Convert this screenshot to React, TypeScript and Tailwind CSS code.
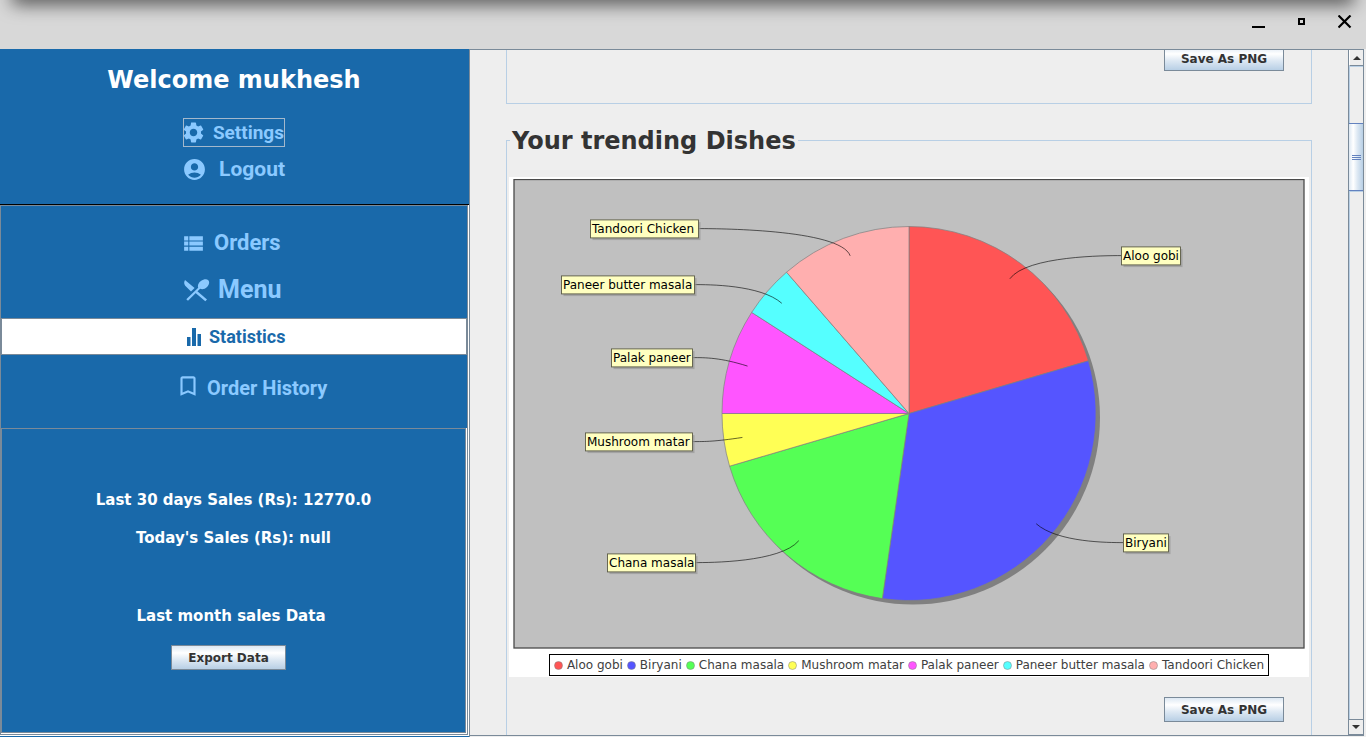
import type { ReactNode } from "react";
import {
  MdSettings,
  MdAccountCircle,
  MdViewList,
  MdBookmarkBorder,
} from "react-icons/md";

type Slice = {
  name: string;
  count: number;
  color: string;
  label: { x: number; y: number; width: number };
};

const SLICES: Slice[] = [
  { name: "Aloo gobi", count: 9, color: "#ff5555", label: { x: 1121, y: 256, width: 59 } },
  { name: "Biryani", count: 14, color: "#5555ff", label: { x: 1123, y: 543, width: 45 } },
  { name: "Chana masala", count: 8, color: "#55ff55", label: { x: 607, y: 563, width: 88 } },
  { name: "Mushroom matar", count: 2, color: "#ffff55", label: { x: 585, y: 442, width: 107 } },
  { name: "Palak paneer", count: 4, color: "#ff55ff", label: { x: 611, y: 358, width: 81 } },
  { name: "Paneer butter masala", count: 2, color: "#55ffff", label: { x: 561, y: 285, width: 133 } },
  { name: "Tandoori Chicken", count: 5, color: "#ffafaf", label: { x: 590, y: 229, width: 108 } },
];

const TOTAL = SLICES.reduce((sum, s) => sum + s.count, 0);
const CX = 909;
const CY = 413.5;
const R = 187;

function polar(fraction: number, radius: number): [number, number] {
  const a = fraction * Math.PI * 2;
  return [CX + Math.sin(a) * radius, CY - Math.cos(a) * radius];
}

function PieChart() {
  let start = 0;
  const wedges = SLICES.map((s) => {
    const from = start / TOTAL;
    start += s.count;
    const to = start / TOTAL;
    return { ...s, from, to, mid: (from + to) / 2 };
  });
  return (
    <svg viewBox="513 179 792 470" className="block w-full" role="img" aria-label="Trending dishes">
      <rect x="514" y="179.5" width="790" height="468.5" fill="#c0c0c0" stroke="#4a4a4a" strokeWidth="1.3" />
      <circle cx={CX + 4} cy={CY + 4} r={R} fill="#808080" />
      {wedges.map((w) => {
        const [x1, y1] = polar(w.from, R);
        const [x2, y2] = polar(w.to, R);
        const large = w.to - w.from > 0.5 ? 1 : 0;
        return (
          <path
            key={w.name}
            d={`M${CX} ${CY}L${x1} ${y1}A${R} ${R} 0 ${large} 1 ${x2} ${y2}Z`}
            fill={w.color}
            stroke="#808080"
            strokeWidth="0.7"
          />
        );
      })}
      {wedges.map((w) => {
        const right = w.mid < 0.5;
        const edge = right ? w.label.x : w.label.x + w.label.width;
        const near = right ? edge - 14 : edge + 14;
        const [lx, ly] = polar(w.mid, R * 0.9);
        const [ex] = polar(w.mid, R * 1.05);
        const y = w.label.y - 0.4;
        return (
          <g key={w.name}>
            <path
              d={`M${edge} ${y}C${near} ${y} ${ex} ${y} ${lx} ${ly}`}
              fill="none"
              stroke="#000"
              strokeOpacity="0.75"
              strokeWidth="0.8"
            />
            <rect x={w.label.x + 2.5} y={y - 6.5} width={w.label.width} height="18" fill="#979797" fillOpacity="0.7" />
            <rect
              x={w.label.x + 0.5}
              y={y - 8.7}
              width={w.label.width}
              height="18"
              fill="#ffffc0"
              stroke="#5b5b46"
              strokeWidth="0.9"
            />
            <text x={w.label.x + 2} y={w.label.y + 4} className="font-['DejaVu_Sans'] text-[12px]" fill="#000">
              {w.name}
            </text>
          </g>
        );
      })}
    </svg>
  );
}

function SteelButton({ children, className = "" }: { children: ReactNode; className?: string }) {
  return (
    <button
      type="button"
      className={`h-[25px] shrink-0 border border-[#7a8a99] bg-[linear-gradient(#dde8f3_0%,#ffffff_30%,#dde8f3_60%,#b8cfe5_100%)] text-[12px] font-bold text-[#333333] ${className}`}
    >
      {children}
    </button>
  );
}

function CutleryIcon() {
  return (
    <svg viewBox="0 0 26 23" className="h-[23px] w-[26px]" fill="currentColor" aria-hidden="true">
      <path d="M1 1c-1.500 2.500-.8 4.800 1 6.600l5 5 3.600-3.600z" />
      <path d="M14.200 8.800c-.9-2.300.2-5 2.700-6.800 2.700-2 5.900-2.300 7.400-.8s1 4.500-1.300 6.700c-2.100 2.100-4.800 2.800-6.900 1.800L4 21.800l-1.700-1.600z" />
      <path d="m12.500 11.500 10.500 9-1.700 1.700L10.600 13.200z" />
    </svg>
  );
}

function BarsIcon() {
  return (
    <svg viewBox="0 0 14 18" className="h-[18px] w-[14px]" fill="currentColor" aria-hidden="true">
      <path d="M0 9h3.500v9H0zM5 0h4v18H5zM10.500 6H14v12h-3.500z" />
    </svg>
  );
}

const NAV_LINK = "flex items-center font-['Roboto'] leading-[28px] text-[#8bc9ff]";

function Sidebar() {
  return (
    <aside className="flex w-[470px] shrink-0 flex-col border-r border-[#7a8a99] bg-[#1969aa]">
      <div className="flex h-[156px] flex-col items-center border-b border-black pr-px pt-[16px]">
        <h1 className="text-[24px] font-bold leading-[30px] text-white">Welcome mukhesh</h1>
        <nav className="mt-[23px] flex w-[102px] flex-col gap-[8px]" aria-label="Account">
          <a href="#settings" className={`${NAV_LINK} h-[29px] justify-between border border-[#a3b8cc] text-[19px] font-bold`}>
            <MdSettings className="-ml-[3px] size-[25px]" />
            Settings
          </a>
          <a href="#logout" className={`${NAV_LINK} justify-between text-[21px] font-bold`}>
            <MdAccountCircle className="-ml-[1px] size-[25px]" />
            Logout
          </a>
        </nav>
      </div>
      <div className="mb-px flex flex-1 flex-col border-b border-r border-white">
        <div className="flex flex-1 flex-col border border-[#7a8a99]">
          <nav className="flex flex-col" aria-label="Main">
            <a href="#orders" className={`${NAV_LINK} mt-[23px] pl-[180px] text-[22px] font-bold`}>
              <MdViewList className="size-[25px]" />
              <span className="ml-[8px]">Orders</span>
            </a>
            <a href="#menu" className={`${NAV_LINK} mt-[19px] pl-[183px] text-[25px] font-bold`}>
              <CutleryIcon />
              <span className="ml-[8px]">Menu</span>
            </a>
            <a
              href="#statistics"
              aria-current="page"
              className="mt-[14px] flex h-[37px] items-center border border-[#7a8a99] bg-white pl-[185px] font-['Roboto'] text-[18px] font-bold text-[#1969aa]"
            >
              <BarsIcon />
              <span className="ml-[8px]">Statistics</span>
            </a>
            <a href="#history" className={`${NAV_LINK} mt-[19px] pl-[174px] text-[20px] font-bold`}>
              <MdBookmarkBorder className="-mt-[4px] size-[26px]" />
              <span className="ml-[6px]">Order History</span>
            </a>
          </nav>
          <section className="mt-[26px] flex flex-1 flex-col border-b border-r border-white">
            <div className="flex flex-1 flex-col items-center border border-[#7a8a99] pt-[61px] text-[15px] font-bold leading-[20px] text-white">
              <p>Last 30 days Sales (Rs): 12770.0</p>
              <p className="mt-[18px]">Today's Sales (Rs): null</p>
              <p className="mt-[58px] pr-[5px]">Last month sales Data</p>
              <SteelButton className="mr-[10px] mt-[19px] w-[115px]">Export Data</SteelButton>
            </div>
          </section>
        </div>
      </div>
    </aside>
  );
}

function ScrollBar() {
  return (
    <div className="flex w-[16px] shrink-0 flex-col border-x border-[#7a8a99]" aria-hidden="true">
      <div className="flex h-[16px] items-center justify-center border-b border-l border-[#7a8a99] border-l-white">
        <svg viewBox="0 0 8 4" className="h-[4px] w-[8px]">
          <path d="M4 0 8 4H0z" fill="#333" />
        </svg>
      </div>
      <div className="h-[57px] border-l border-t border-[#b8cfe5]" />
      <div className="flex h-[68px] flex-col items-center justify-center gap-px border-y border-[#6382bf] bg-[linear-gradient(90deg,#dde8f3_0%,#ffffff_30%,#dde8f3_60%,#b8cfe5_100%)]">
        <div className="h-px w-[9px] bg-[#6382bf]" />
        <div className="h-px w-[9px] bg-[#6382bf]" />
        <div className="h-px w-[9px] bg-[#6382bf]" />
      </div>
      <div className="flex-1 border-l border-t border-[#b8cfe5]" />
      <div className="flex h-[16px] items-center justify-center border-y border-[#7a8a99]">
        <svg viewBox="0 0 8 4" className="h-[4px] w-[8px]">
          <path d="M0 0h8L4 4z" fill="#333" />
        </svg>
      </div>
    </div>
  );
}

function TitleBar() {
  return (
    <header className="relative flex h-[49px] shrink-0 justify-end bg-[#d8d8d8] pr-[14px]">
      <div className="absolute inset-0 overflow-hidden">
        <div className="-mt-[10px] mx-[16px] h-[10px] shadow-[0_0_18px_4px_rgba(0,0,0,0.65)]" />
      </div>
      <div className="relative flex h-[43px] items-center gap-[29px] text-black">
        <button type="button" aria-label="Minimize" className="h-[14px] w-[14px]">
          <svg viewBox="0 0 14 14" className="size-[14px]">
            <path d="M0 11h13v2H0z" />
          </svg>
        </button>
        <button type="button" aria-label="Maximize" className="h-[14px] w-[14px]">
          <svg viewBox="0 0 14 14" className="size-[14px]">
            <path d="M4 4h5v5H4z" fill="none" stroke="#000" strokeWidth="2" />
          </svg>
        </button>
        <button type="button" aria-label="Close" className="h-[14px] w-[14px]">
          <svg viewBox="0 0 14 14" className="size-[14px]">
            <path d="m.5.500 12 12M12.500.500l-12 12" stroke="#000" strokeWidth="2.200" />
          </svg>
        </button>
      </div>
    </header>
  );
}

export default function App() {
  return (
    <div className="flex h-screen flex-col overflow-hidden bg-[#eeeeee] font-['DejaVu_Sans','Verdana',sans-serif]">
      <TitleBar />
      <div className="flex min-h-0 flex-1">
        <Sidebar />
        <main className="mb-px mr-[2px] flex min-w-0 flex-1 border-y border-[#7a8a99]">
          <div className="min-w-0 flex-1 overflow-hidden px-[36px]">
            <section className="flex h-[54px] items-start justify-end border border-t-0 border-[#b8cfe5] pr-[27px]">
              <SteelButton className="-mt-[4px] w-[120px]">Save As PNG</SteelButton>
            </section>
            <fieldset className="mt-[22px] border border-[#b8cfe5] px-[2px]">
              <legend className="ml-[1px] px-[2px] pt-[2px] text-[24px] font-bold leading-[26px] text-[#333333]">
                Your trending Dishes
              </legend>
              <div className="mt-[23px] bg-white px-[4px] pb-px pt-[2px]">
                <PieChart />
                <ul className="mx-auto mt-[5px] flex h-[22px] w-fit items-center gap-[4px] whitespace-nowrap border border-black px-[4px] text-[12px] text-[#404040]">
                  {SLICES.map((s) => (
                    <li key={s.name} className="flex items-center gap-[4px]">
                      <svg viewBox="0 0 9 9" className="size-[9px]" aria-hidden="true">
                        <circle cx="4.500" cy="4.500" r="4" fill={s.color} stroke="#808080" strokeWidth="0.500" />
                      </svg>
                      {s.name}
                    </li>
                  ))}
                </ul>
              </div>
              <div className="flex justify-end pb-[60px] pr-[25px] pt-[20px]">
                <SteelButton className="w-[120px]">Save As PNG</SteelButton>
              </div>
            </fieldset>
          </div>
          <ScrollBar />
        </main>
      </div>
    </div>
  );
}
